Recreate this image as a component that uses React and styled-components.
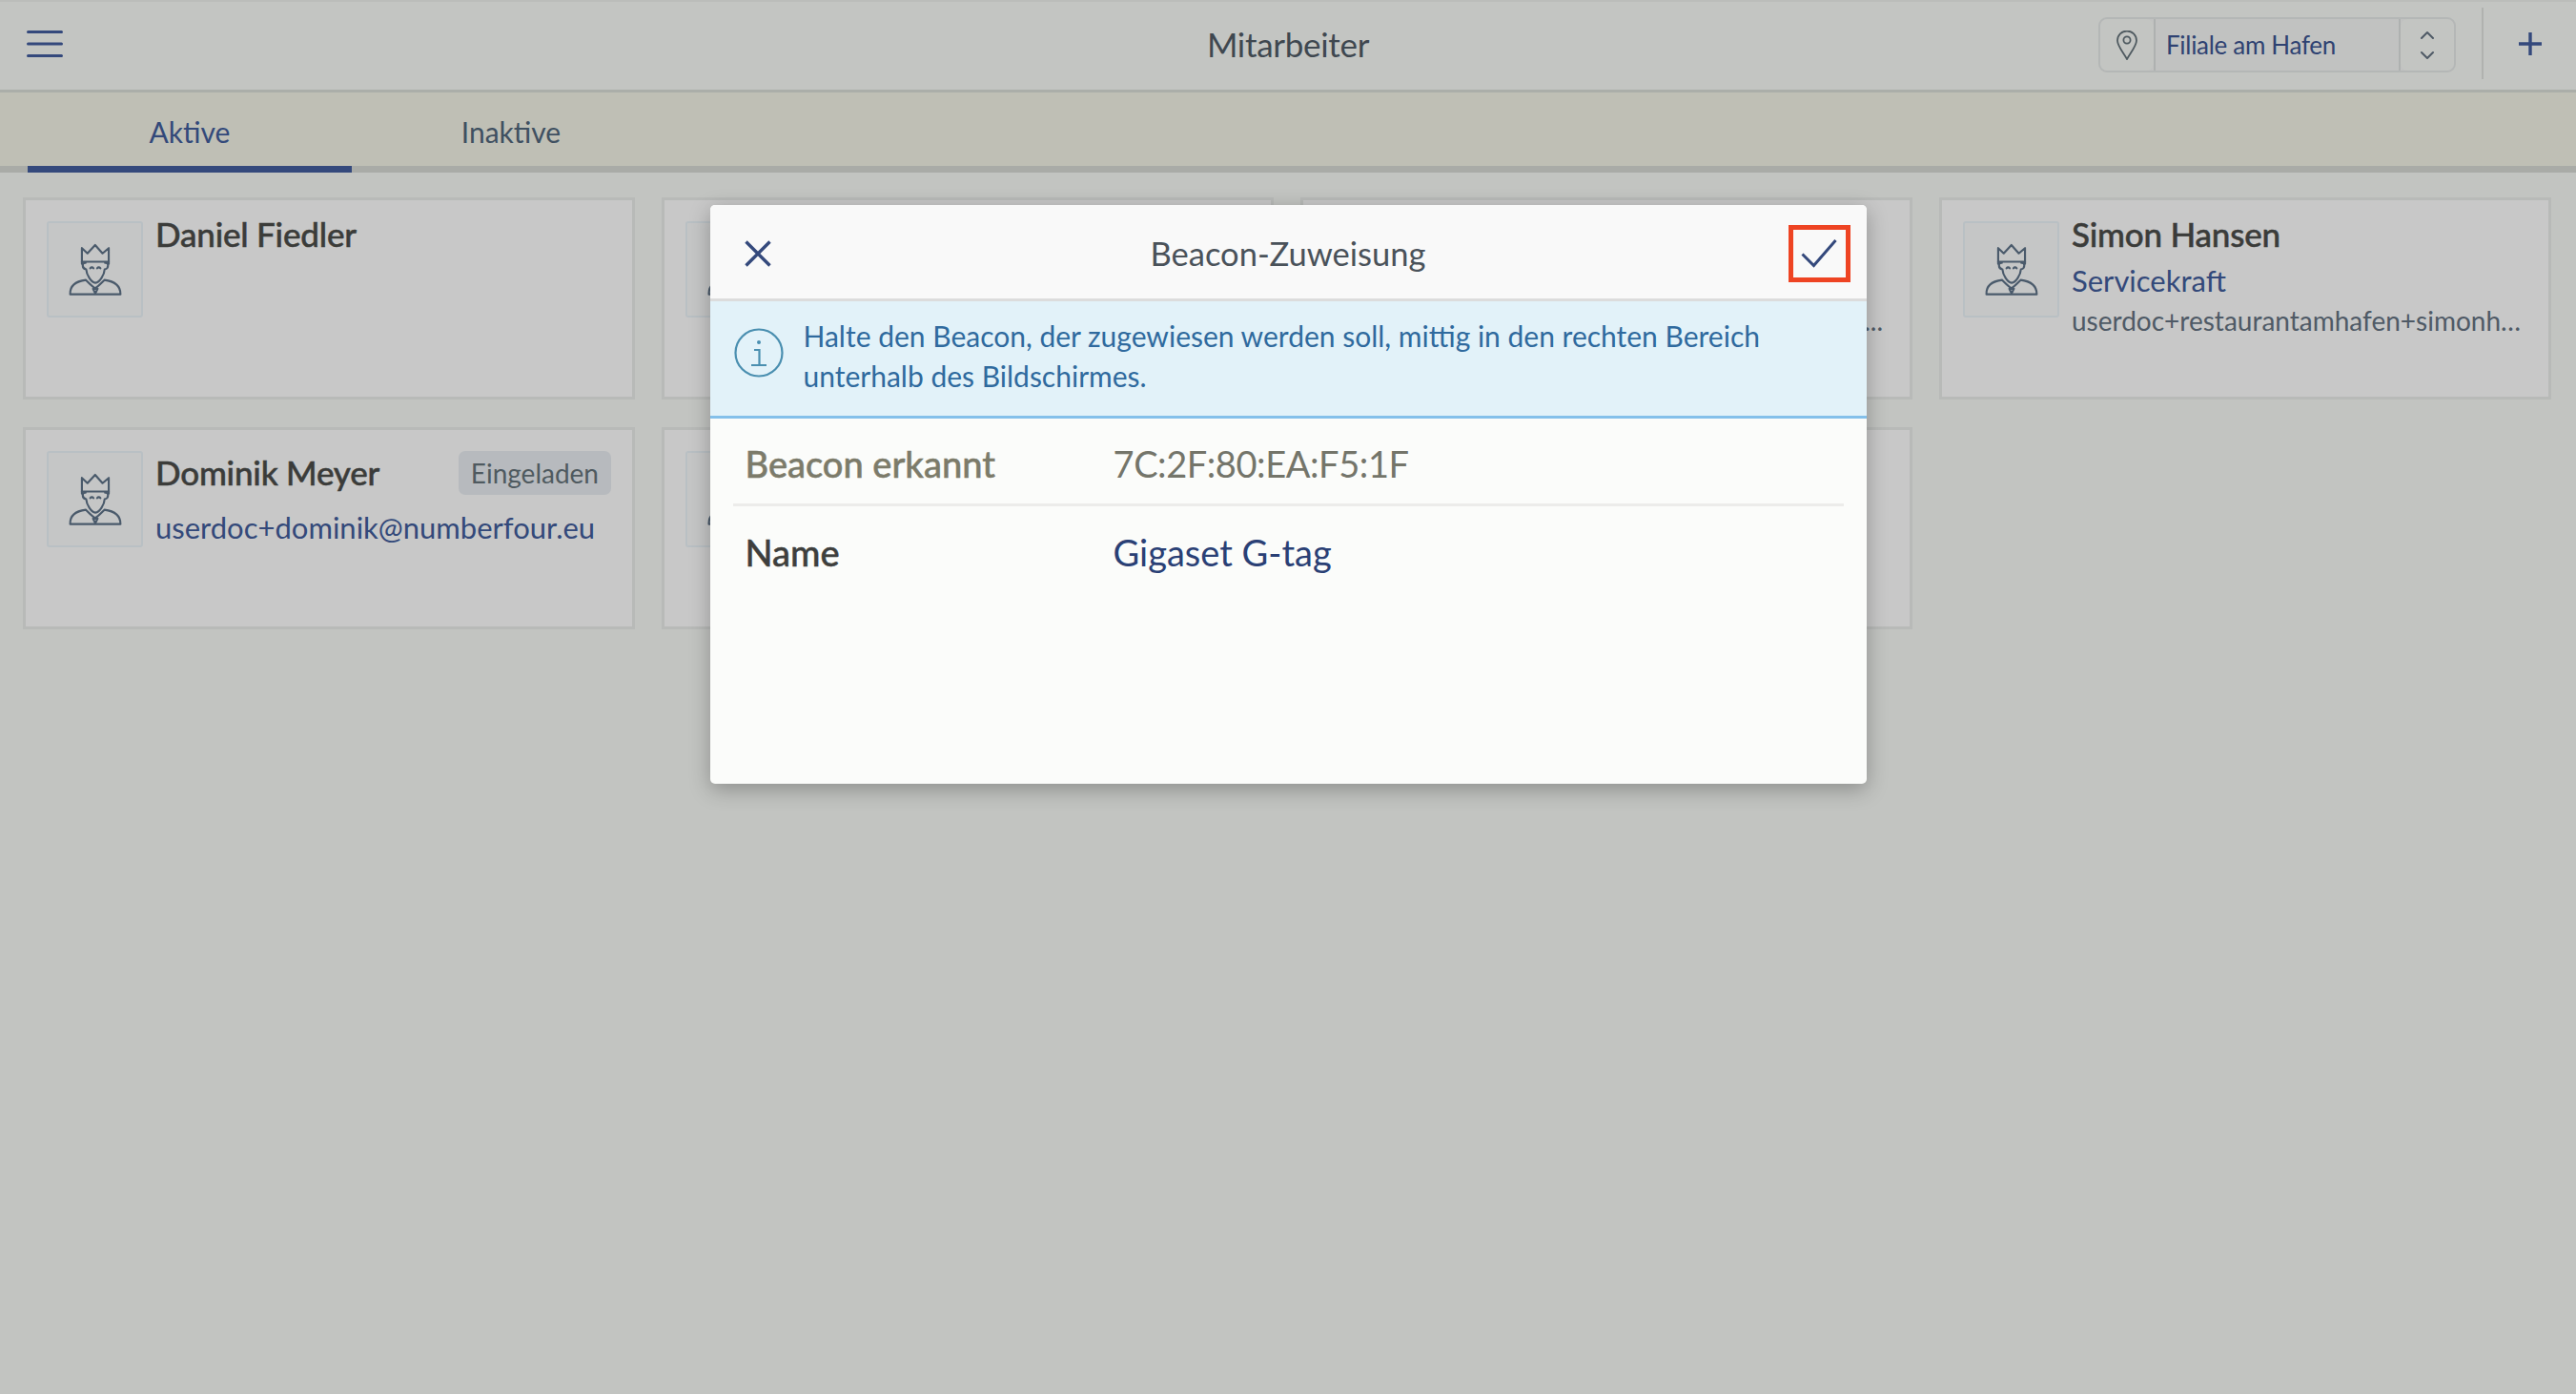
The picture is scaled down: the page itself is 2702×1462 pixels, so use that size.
import React from "react";
import styled, { createGlobalStyle } from "styled-components";

const Global = createGlobalStyle`
  html, body { margin: 0; padding: 0; background: #c2c4c1; }
  body { font-family: "Lato", "Liberation Sans", sans-serif; }
  * { box-sizing: border-box; }
`;

const Page = styled.div`
  position: relative;
  width: 2702px;
  height: 1462px;
  overflow: hidden;
  background: #c2c4c1;
`;
const TopBar = styled.header`
  height: 97px;
  display: grid;
  grid-template-columns: 1fr auto 1fr;
  align-items: center;
  padding-bottom: 5px;
  background: #c3c5c2;
  border-top: 2px solid #bbbdba;
  border-bottom: 3px solid #abaea9;
`;
const MenuButton = styled.div`
  padding-left: 28px;
  display: flex;
  svg { display: block; }
`;
const Title = styled.h1`
  margin: 1px 0 0;
  font-size: 35px;
  letter-spacing: -0.3px;
  font-weight: 400;
  color: #3f4850;
`;
const TopRight = styled.div`
  justify-self: end;
  display: flex;
  align-items: center;
  height: 75px;
`;
const Selector = styled.div`
  width: 375px;
  height: 58px;
  display: flex;
  border: 2px solid #b4b7b6;
  border-radius: 9px;
  margin: 3px 27px 0 0;
  background: #c1c2c1;
`;
const SelectorCell = styled.div`
  width: ${(p) => p.$w}px;
  flex: none;
  display: flex;
  align-items: center;
  justify-content: center;
  background: #c3c5c2;
  border-radius: 8px;
`;
const SelectorText = styled.div`
  flex: 1;
  display: flex;
  align-items: center;
  padding-left: 11px;
  font-size: 26px;
  letter-spacing: -0.3px;
  color: #2f4272;
  border-left: 2px solid #aeb1b0;
  border-right: 2px solid #aeb1b0;
`;
const AddButton = styled.div`
  width: 99px;
  height: 75px;
  display: flex;
  align-items: center;
  justify-content: center;
  border-left: 2px solid #b0b2af;
`;
const Tabs = styled.nav`
  height: 84px;
  display: flex;
  padding-left: 29px;
  background: #bfbfb5;
  border-bottom: 7px solid #a9aba7;
`;
const Tab = styled.div`
  width: 340px;
  height: 84px;
  display: flex;
  align-items: center;
  justify-content: center;
  padding-top: 4px;
  font-size: 30px;
  color: ${(p) => (p.$active ? "#33497a" : "#3f5061")};
  border-bottom: 7px solid ${(p) => (p.$active ? "#34497c" : "transparent")};
  & + & { margin-left: -3px; }
`;
const Grid = styled.main`
  display: grid;
  grid-template-columns: repeat(4, 642px);
  grid-auto-rows: 212px;
  gap: 29px 28px;
  padding: 26px 0 0 24px;
`;
const Card = styled.article`
  display: flex;
  gap: 13px;
  padding: 22px 22px 0;
  background: #c8c8c8;
  border: 3px solid #b8bab8;
  min-width: 0;
`;
const Avatar = styled.div`
  width: 101px;
  height: 101px;
  flex: none;
  background: #c5c6c6;
  border: 2px solid #b9c0c4;
  border-radius: 3px;
  svg { display: block; }
`;
const CardText = styled.div`
  flex: 1;
  min-width: 0;
`;
const NameRow = styled.div`
  display: flex;
  justify-content: space-between;
  align-items: flex-start;
`;
const Name = styled.div`
  font-size: 35px;
  line-height: 38px;
  font-weight: 500;
  letter-spacing: -0.2px;
  -webkit-text-stroke: 0.5px #3b3c3a;
  color: #3b3c3a;
  margin-top: ${(p) => (p.$invited ? 3 : -6)}px;
`;
const Badge = styled.div`
  height: 46px;
  padding: 0 13px;
  display: flex;
  align-items: center;
  font-size: 28px;
  color: #4f5a60;
  background: #b7babe;
  border-radius: 7px;
`;
const Role = styled.div`
  font-size: 31px;
  line-height: 44px;
  margin-top: 8px;
  color: #33497a;
`;
const Email = styled.div`
  font-size: ${(p) => (p.$large ? 31 : 28)}px;
  line-height: 40px;
  margin-top: ${(p) => (p.$large ? 14 : 0)}px;
  color: ${(p) => (p.$large ? "#33497a" : "#4f5a66")};
  white-space: nowrap;
  overflow: hidden;
  text-overflow: ellipsis;
`;
const Ellipsis = styled.div`
  margin-top: 84px;
  padding-right: 6px;
  text-align: right;
  font-size: 28px;
  line-height: 40px;
  color: #4f5a66;
`;
const Overlay = styled.div`
  position: absolute;
  inset: 0;
  display: flex;
  justify-content: center;
  align-items: flex-start;
  padding-top: 215px;
`;
const Modal = styled.section`
  width: 1213px;
  height: 607px;
  display: flex;
  flex-direction: column;
  background: #fbfcfa;
  border-radius: 5px;
  overflow: hidden;
  box-shadow: 0 6px 22px rgba(0, 0, 0, 0.28);
`;
const ModalHeader = styled.div`
  height: 101px;
  flex: none;
  position: relative;
  display: flex;
  align-items: center;
  justify-content: center;
  padding-top: 3px;
  background: #f9f9f9;
  border-bottom: 3px solid #dcdcdc;
`;
const ModalTitle = styled.h2`
  margin: 0;
  font-size: 34.5px;
  font-weight: 400;
  color: #4a525a;
`;
const CloseIcon = styled.div`
  position: absolute;
  left: 36px;
  top: 37px;
  svg { display: block; }
`;
const ConfirmHighlight = styled.div`
  position: absolute;
  left: 1131px;
  top: 21px;
  width: 65px;
  height: 60px;
  display: flex;
  align-items: center;
  justify-content: center;
  border: 5px solid #ee4423;
  svg { display: block; }
`;
const Info = styled.div`
  height: 123px;
  flex: none;
  display: flex;
  gap: 21px;
  padding: 15px 0 0 25px;
  background: #e2f2f9;
  border-bottom: 3px solid #84c0ea;
`;
const InfoIcon = styled.div`
  flex: none;
  margin-top: 13px;
  svg { display: block; }
`;
const InfoText = styled.p`
  margin: 0;
  font-size: 30px;
  line-height: 42px;
  color: #2f6a9e;
  white-space: nowrap;
`;
const Rows = styled.div`
  padding: 0 24px;
`;
const Row = styled.div`
  display: flex;
  align-items: center;
  height: 92px;
  padding: 4px 0 0 13px;
  border-bottom: ${(p) => (p.$divider ? "3px solid #ececea" : "none")};
  font-size: 38px;
`;
const Label = styled.div`
  width: 386px;
  flex: none;
  font-weight: 500;
  color: ${(p) => (p.$muted ? "#7c7b6a" : "#3e3f3d")};
  -webkit-text-stroke: 0.5px ${(p) => (p.$muted ? "#7c7b6a" : "#3e3f3d")};
`;
const Value = styled.div`
  color: ${(p) => (p.$accent ? "#2a4075" : "#74756a")};
  letter-spacing: ${(p) => (p.$accent ? 0 : -0.4)}px;
`;

const MenuIcon = () => (
  <svg width="38" height="28" viewBox="0 0 38 28" fill="none" stroke="#34497c" strokeWidth="3" strokeLinecap="round">
    <path d="M1.5 1.5h35M1.5 14h35M1.5 26.5h35" />
  </svg>
);
const PinIcon = () => (
  <svg width="22" height="31" viewBox="0 0 22 31" fill="none" stroke="#4f5a60" strokeWidth="1.8">
    <path d="M11 30C7 23 1 16 1 10.5a10 10 0 0 1 20 0C21 16 15 23 11 30Z" />
    <circle cx="11" cy="10" r="3.6" />
  </svg>
);
const UpDownIcon = () => (
  <svg width="16" height="31" viewBox="0 0 16 31" fill="none" stroke="#4f5a66" strokeWidth="2" strokeLinecap="round" strokeLinejoin="round">
    <path d="M2 8l6-6 6 6M2 23l6 6 6-6" />
  </svg>
);
const PlusIcon = () => (
  <svg width="24" height="24" viewBox="0 0 24 24" fill="none" stroke="#34497c" strokeWidth="3.4">
    <path d="M12 0v24M0 12h24" />
  </svg>
);
const PersonIcon = () => (
  <svg width="97" height="97" viewBox="0 0 100 100" fill="none" stroke="#4a5a6b" strokeWidth="2.2" strokeLinejoin="round" strokeLinecap="round">
    <path d="M36 44V27l6 5.7 8.3-9 8 9L65 27v17" />
    <path d="M36 41.7h29" />
    <path d="M40 43c-4-1-4.5 6 .6 7 .4 6 5.5 14 10 14.5 4.5-.5 9.6-8.5 10-14.5 5-1 4.5-8 .4-7" />
    <path d="M45 48.8c1-1.3 2.5-1.3 3.5 0M52.5 48.8c1-1.3 2.5-1.3 3.5 0" />
    <path d="M23.3 77c-.5-9 5-14 17-15.5 3 3 7 7 10 9 3-2 7-6 10-9 12 1.5 17.5 6.5 17.4 15.5Z" />
    <path d="M48 71h5l-2.5 5Z" />
  </svg>
);
const CloseGlyph = () => (
  <svg width="28" height="28" viewBox="0 0 28 28" fill="none" stroke="#34497c" strokeWidth="3.4">
    <path d="M1.5 1.5l25 25M26.5 1.5l-25 25" />
  </svg>
);
const CheckGlyph = () => (
  <svg width="38" height="30" viewBox="0 0 38 30" fill="none" stroke="#34497c" strokeWidth="3">
    <path d="M1.5 15.5l12 12L36.5 1" />
  </svg>
);
const InfoGlyph = () => (
  <svg width="52" height="52" viewBox="0 0 52 52" fill="none" stroke="#4a8fb0" strokeWidth="2.2">
    <circle cx="26" cy="26" r="24.5" />
    <circle cx="26" cy="15" r="2" fill="#4a8fb0" stroke="none" />
    <path d="M21 23h5.5v16M18 39h16" />
  </svg>
);

const people = [
  { id: 1, name: "Daniel Fiedler" },
  { id: 2 },
  { id: 3, hiddenMail: true },
  { id: 4, name: "Simon Hansen", role: "Servicekraft", mail: "userdoc+restaurantamhafen+simonhansen@numberfour.eu" },
  { id: 5, name: "Dominik Meyer", badge: "Eingeladen", large: "userdoc+dominik@numberfour.eu" },
  { id: 6 },
  { id: 7 },
];

export default function App() {
  return (
    <Page>
      <Global />
      <TopBar>
        <MenuButton><MenuIcon /></MenuButton>
        <Title>Mitarbeiter</Title>
        <TopRight>
          <Selector>
            <SelectorCell $w={56}><PinIcon /></SelectorCell>
            <SelectorText>Filiale am Hafen</SelectorText>
            <SelectorCell $w={56}><UpDownIcon /></SelectorCell>
          </Selector>
          <AddButton><PlusIcon /></AddButton>
        </TopRight>
      </TopBar>
      <Tabs>
        <Tab $active>Aktive</Tab>
        <Tab>Inaktive</Tab>
      </Tabs>
      <Grid>
        {people.map((p) => (
          <Card key={p.id}>
            <Avatar><PersonIcon /></Avatar>
            <CardText>
              {p.name && (
                <NameRow>
                  <Name $invited={!!p.badge}>{p.name}</Name>
                  {p.badge && <Badge>{p.badge}</Badge>}
                </NameRow>
              )}
              {p.role && <Role>{p.role}</Role>}
              {p.mail && <Email>{p.mail}</Email>}
              {p.large && <Email $large>{p.large}</Email>}
              {p.hiddenMail && <Ellipsis>...</Ellipsis>}
            </CardText>
          </Card>
        ))}
      </Grid>
      <Overlay>
        <Modal>
          <ModalHeader>
            <CloseIcon><CloseGlyph /></CloseIcon>
            <ModalTitle>Beacon-Zuweisung</ModalTitle>
            <ConfirmHighlight><CheckGlyph /></ConfirmHighlight>
          </ModalHeader>
          <Info>
            <InfoIcon><InfoGlyph /></InfoIcon>
            <InfoText>
              Halte den Beacon, der zugewiesen werden soll, mittig in den rechten Bereich
              <br />
              unterhalb des Bildschirmes.
            </InfoText>
          </Info>
          <Rows>
            <Row $divider>
              <Label $muted>Beacon erkannt</Label>
              <Value>7C:2F:80:EA:F5:1F</Value>
            </Row>
            <Row>
              <Label>Name</Label>
              <Value $accent>Gigaset G-tag</Value>
            </Row>
          </Rows>
        </Modal>
      </Overlay>
    </Page>
  );
}
